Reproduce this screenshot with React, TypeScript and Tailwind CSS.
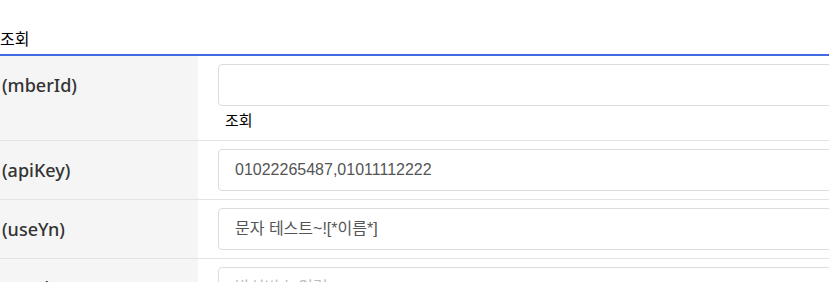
import React from "react";

interface Row {
  label: string;
  value: string;
  note?: string;
  placeholder?: boolean;
}

const rows: Row[] = [
  { label: "(mberId)", value: "", note: "조회" },
  { label: "(apiKey)", value: "01022265487,01011112222" },
  { label: "(useYn)", value: "문자 테스트~![*이름*]" },
  { label: "(sendNo)", value: "발신번호 입력", placeholder: true },
];

export default function App() {
  return (
    <div className="w-[829px] h-[282px] overflow-hidden bg-white font-['Noto_Sans','Noto_Sans_CJK_KR',sans-serif]">
      <div className="w-[1100px] pt-[26px]">
        {/* title */}
        <h3 className="text-[16px] leading-6 text-black font-normal pb-1 font-['Noto_Sans_CJK_KR',sans-serif]">
          조회
        </h3>
        <div className="border-t-2 border-[#4169e1]">
          {rows.map((row, i) => (
            <div key={i} className="flex border-b border-[#e3e3e3]">
              {/* label cell */}
              <div className="w-[198px] shrink-0 bg-[#f5f5f5] pl-[2px] py-2">
                <div className="h-[42px] flex items-center text-[18px] font-medium text-[#333]">
                  {row.label}
                </div>
              </div>
              {/* value cell */}
              <div className="flex-1 pl-5 pt-2 pb-2">
                <div
                  className={`h-[42px] w-[800px] border border-[#dcdcdc] rounded bg-white flex items-center pl-4 text-[16px] font-['Liberation_Sans','Noto_Sans_CJK_KR',sans-serif] ${
                    row.placeholder ? "text-[#bbb]" : "text-[#555]"
                  }`}
                >
                  {row.value}
                </div>
                {row.note && (
                  <div className="pl-[7px] pt-[2px] text-[15px] leading-6 text-black font-['Noto_Sans_CJK_KR',sans-serif]">
                    {row.note}
                  </div>
                )}
              </div>
            </div>
          ))}
        </div>
      </div>
    </div>
  );
}
